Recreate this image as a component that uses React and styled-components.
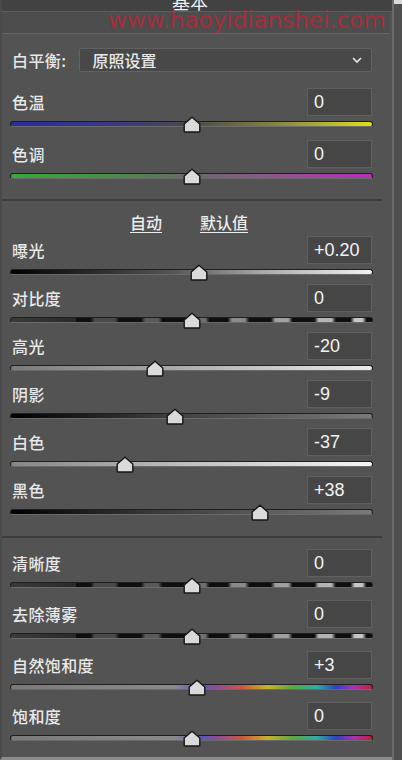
import React from "react";
import styled, { createGlobalStyle } from "styled-components";

const GlobalStyle = createGlobalStyle`
  html, body {
    margin: 0;
    padding: 0;
    background: #535353;
  }
  * {
    box-sizing: border-box;
  }
`;

const cjk = `"Noto Sans CJK SC", "Noto Sans", sans-serif`;

const Panel = styled.div`
  width: 402px;
  height: 760px;
  display: flex;
  background: #535353;
  overflow: hidden;
  font-family: ${cjk};
  color: #e8e8e8;
`;

const Main = styled.div`
  flex: 1;
  display: flex;
  flex-direction: column;
  border-left: 2px solid #4a4a4a;
  border-bottom: 3px solid #8a8a8a;
`;

const ScrollBar = styled.div`
  width: 10px;
  background: #4f4f4f;
  border-left: 2px solid #6c6c6c;
  display: flex;
  flex-direction: column;
`;

const ScrollCap = styled.div`
  height: 4px;
  background: #d8d8d8;
`;

const TitleBar = styled.div`
  height: 12px;
  overflow: hidden;
  background: #424242;
  display: flex;
  justify-content: center;
  padding-right: 14px;
  border-bottom: 1px solid #5e5e5e;
`;

const Title = styled.span`
  font-size: 18px;
  line-height: 18px;
  margin-top: -8px;
  color: #f0f0f0;
`;

const WatermarkBar = styled.div`
  position: relative;
  height: 22px;
  background: #4d4d4d;
  border-bottom: 1px solid #646464;
  margin-right: 2px;
`;

const Watermark = styled.span`
  position: absolute;
  left: 106px;
  top: 0;
  font-family: "DejaVu Sans", Verdana, sans-serif;
  font-size: 23px;
  line-height: 16px;
  color: rgba(190, 35, 55, 0.78);
  white-space: nowrap;
`;

const Content = styled.div`
  display: flex;
  flex-direction: column;
  padding: 0 19px 0 8px;
  margin-top: ${(p) => p.$top || 0}px;
`;

const WBRow = styled.div`
  display: flex;
  align-items: center;
  height: 24px;
`;

const Label = styled.span`
  padding-left: 2px;
  font-size: 16px;
  font-weight: 500;
  line-height: 20px;
  letter-spacing: 0.4px;
  white-space: nowrap;
`;

const Dropdown = styled.div`
  margin-left: 13px;
  flex: 1;
  height: 24px;
  margin-right: 1px;
  background: #484848;
  border: 1px solid #626262;
  border-radius: 2px;
  display: flex;
  align-items: center;
  justify-content: space-between;
  padding: 0 8px 0 12px;
  font-size: 16px;
  font-weight: 500;
`;

const Separator = styled.div`
  height: 2px;
  background: #3d3d3d;
  margin-right: 10px;
  margin-top: ${(p) => p.$top}px;
`;

const LinkRow = styled.div`
  display: flex;
  justify-content: center;
  gap: 38px;
  height: 24px;
  align-items: center;
  margin-top: 9px;
  margin-bottom: 2px;
  padding-right: 16px;
`;

const LinkText = styled.span`
  font-size: 16px;
  font-weight: 500;
  text-decoration: underline;
  text-underline-offset: 3px;
  color: #ececec;
`;

const LabelRow = styled.div`
  display: flex;
  justify-content: space-between;
  align-items: center;
  height: 28px;
`;

const ValueBox = styled.div`
  width: 65px;
  height: 28px;
  margin-right: 1px;
  background: #464646;
  border: 1px solid #606060;
  display: flex;
  align-items: center;
  padding-left: 6px;
  font-family: "Liberation Sans", Arial, sans-serif;
  font-size: 18px;
  color: #f2f2f2;
`;

const TrackRow = styled.div`
  height: ${(p) => p.$h}px;
  padding-top: 5px;
`;

const Track = styled.div`
  position: relative;
  height: 6px;
  border-radius: 3px;
  border: 1px solid #1f1f1f;
  border-bottom-color: #6a6a6a;
  background: ${(p) => p.$bg};
`;

const ThumbWrap = styled.div`
  position: absolute;
  top: -6px;
  width: 18px;
  height: 17px;
  display: flex;
`;

function Thumb({ pos }) {
  return (
    <ThumbWrap style={{ left: `calc(${pos * 100}% - 9px)` }}>
      <svg width="18" height="17" viewBox="0 0 18 17">
        <path
          d="M9 1.2 L16.8 8 L16.8 15.6 Q16.8 16 16.4 16 L1.6 16 Q1.2 16 1.2 15.6 L1.2 8 Z"
          fill="#dadada"
          stroke="#161616"
          strokeWidth="1.4"
          strokeLinejoin="round"
        />
      </svg>
    </ThumbWrap>
  );
}

function dashed() {
  const stops = ["#3a3a3a 0%", "#2a2a2a 18%"];
  const segs = [
    [0.22, 0.3, "#4a4a4a"],
    [0.36, 0.42, "#5a5a5a"],
    [0.48, 0.55, "#707070"],
    [0.6, 0.66, "#8a8a8a"],
    [0.72, 0.78, "#a0a0a0"],
    [0.84, 0.9, "#b4b4b4"],
    [0.94, 0.985, "#c8c8c8"],
  ];
  let last = 0.18;
  segs.forEach(([a, b, c]) => {
    stops.push(`#0e0e0e ${last * 100}%`, `#0e0e0e ${a * 100}%`);
    stops.push(`${c} ${(a + 0.012) * 100}%`, `${c} ${(b - 0.012) * 100}%`);
    last = b;
  });
  stops.push(`#0e0e0e ${last * 100}%`, "#0e0e0e 100%");
  return `linear-gradient(90deg, ${stops.join(", ")})`;
}

const rainbow =
  "linear-gradient(90deg, #7a7a7a 0%, #8a8a8a 45%, #5a5ab8 53%, #9a4a90 58%, #c85a3a 64%, #c8b030 71%, #5aa840 78%, #30a8a8 85%, #3040c0 90%, #b030b0 95%, #c02030 100%)";

const tracks = {
  temp: "linear-gradient(90deg, #2a2aa8 0%, #3a3a80 30%, #4a4a4a 50%, #8a8a40 75%, #e0e020 100%)",
  tint: "linear-gradient(90deg, #3aa83a 0%, #4a8a4a 30%, #6a6a6a 50%, #8a5a8a 70%, #b830b8 100%)",
  bw: "linear-gradient(90deg, #000 0%, #555 45%, #aaa 70%, #f4f4f4 100%)",
  dash: dashed(),
  light: "linear-gradient(90deg, #7a7a7a 0%, #b0b0b0 50%, #eaeaea 100%)",
  dark: "linear-gradient(90deg, #000 0%, #3a3a3a 40%, #7a7a7a 100%)",
  white: "linear-gradient(90deg, #858585 0%, #c0c0c0 50%, #f6f6f6 100%)",
  rainbow,
};

function Slider({ label, value, pos, bg, rowH }) {
  return (
    <>
      <LabelRow>
        <Label>{label}</Label>
        <ValueBox>{value}</ValueBox>
      </LabelRow>
      <TrackRow $h={rowH}>
        <Track $bg={bg}>
          <Thumb pos={pos} />
        </Track>
      </TrackRow>
    </>
  );
}

const p = (v, min, max) => (v - min) / (max - min);

const colorSliders = [
  { label: "色温", value: "0", pos: 0.5, bg: tracks.temp },
  { label: "色调", value: "0", pos: 0.5, bg: tracks.tint },
];

const toneSliders = [
  { label: "曝光", value: "+0.20", pos: p(0.2, -5, 5), bg: tracks.bw },
  { label: "对比度", value: "0", pos: 0.5, bg: tracks.dash },
  { label: "高光", value: "-20", pos: p(-20, -100, 100), bg: tracks.light },
  { label: "阴影", value: "-9", pos: p(-9, -100, 100), bg: tracks.dark },
  { label: "白色", value: "-37", pos: p(-37, -100, 100), bg: tracks.white },
  { label: "黑色", value: "+38", pos: p(38, -100, 100), bg: tracks.dark },
];

const presenceSliders = [
  { label: "清晰度", value: "0", pos: 0.5, bg: tracks.dash },
  { label: "去除薄雾", value: "0", pos: 0.5, bg: tracks.dash },
  { label: "自然饱和度", value: "+3", pos: p(3, -100, 100), bg: tracks.rainbow },
  { label: "饱和度", value: "0", pos: 0.5, bg: tracks.rainbow },
];

function Chevron() {
  return (
    <svg width="12" height="8" viewBox="0 0 12 8">
      <path d="M2 2 L6 6 L10 2" fill="none" stroke="#e8e8e8" strokeWidth="1.6" />
    </svg>
  );
}

export default function App() {
  return (
    <>
      <GlobalStyle />
      <Panel>
        <Main>
          <TitleBar>
            <Title>基本</Title>
          </TitleBar>
          <WatermarkBar>
            <Watermark>www.haoyidianshei.com</Watermark>
          </WatermarkBar>
          <Content $top={14}>
            <WBRow>
              <Label>白平衡:</Label>
              <Dropdown>
                <span>原照设置</span>
                <Chevron />
              </Dropdown>
            </WBRow>
          </Content>
          <Content $top={16}>
            {colorSliders.map((s) => (
              <Slider key={s.label} {...s} rowH={24} />
            ))}
          </Content>
          <Separator $top={7} />
          <LinkRow>
            <LinkText>自动</LinkText>
            <LinkText>默认值</LinkText>
          </LinkRow>
          <Content>
            {toneSliders.map((s) => (
              <Slider key={s.label} {...s} rowH={20} />
            ))}
          </Content>
          <Separator $top={12} />
          <Content $top={11}>
            {presenceSliders.map((s) => (
              <Slider key={s.label} {...s} rowH={23} />
            ))}
          </Content>
        </Main>
        <ScrollBar>
          <ScrollCap />
        </ScrollBar>
      </Panel>
    </>
  );
}
